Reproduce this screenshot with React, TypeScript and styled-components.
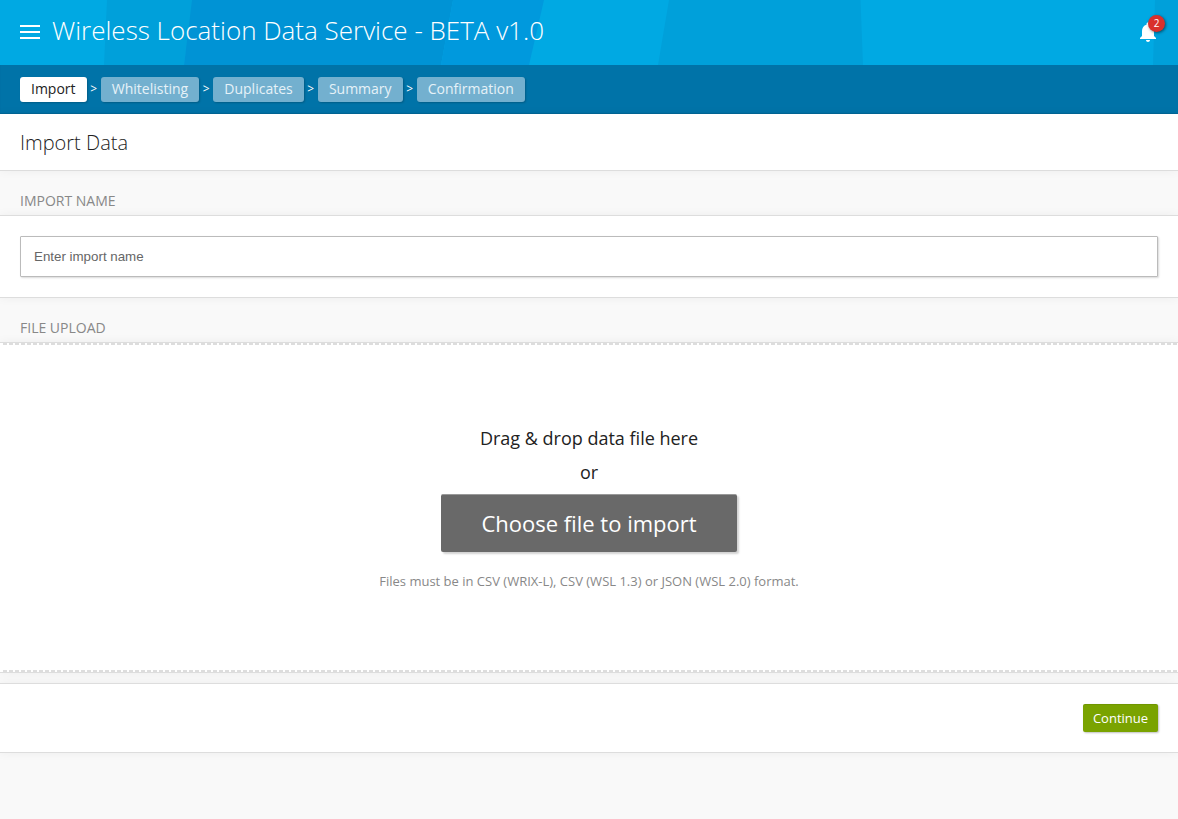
import React from "react";
import styled, { createGlobalStyle, css } from "styled-components";

const GlobalStyle = createGlobalStyle`
  *, *::before, *::after { box-sizing: border-box; }
  body {
    margin: 0;
    min-height: 100vh;
    background: #f9f9f9;
    color: #222;
    font-family: "Open Sans", "Noto Sans", sans-serif;
  }
`;

const Header = styled.header`
  position: relative;
  display: flex;
  align-items: center;
  height: 65px;
  padding: 0 20px 2px;
  background: #00a9e3;
  overflow: hidden;
`;

const HeaderArt = styled.svg`
  position: absolute;
  inset: 0;
  width: 1178px;
  height: 65px;
`;

const MenuButton = styled.button`
  position: relative;
  display: flex;
  flex-direction: column;
  gap: 4px;
  width: 20px;
  margin: 0 12px 0 0;
  padding: 0;
  border: 0;
  background: none;
`;

const MenuBar = styled.span`
  height: 2px;
  background: #fff;
`;

const AppTitle = styled.h1`
  position: relative;
  flex: 1;
  margin: 0;
  color: #fff;
  font-size: 26px;
  font-weight: 300;
  line-height: 36px;
  padding-bottom: 4px;
`;

const Alerts = styled.button`
  position: relative;
  width: 24px;
  height: 24px;
  margin: 0 -2px 0 0;
  padding: 0;
  border: 0;
  background: none;

  svg { display: block; }
`;

const Badge = styled.span`
  position: absolute;
  top: -5px;
  left: 12px;
  width: 17px;
  height: 17px;
  border-radius: 50%;
  background: #d9302c;
  box-shadow: 1px 1px 3px rgba(0, 0, 0, 0.5);
  color: #fff;
  font: 10px/17px "Open Sans", sans-serif;
  text-align: center;
`;

const StepNav = styled.nav`
  display: flex;
  align-items: flex-start;
  height: 49px;
  padding: 12px 20px 0;
  background: #0073a8;
  box-shadow: inset 0 -1px 1px rgba(0, 0, 0, 0.12);
`;

const Step = styled.a<{ $active?: boolean }>`
  height: 25px;
  padding: 0 11px;
  border-radius: 3px;
  background: #73b0cf;
  color: #e6f2f8;
  font-size: 14px;
  line-height: 24px;
  box-shadow: 1px 1px 2px rgba(0, 0, 0, 0.2);
  ${(p) =>
    p.$active &&
    css`
      background: #fff;
      color: #222;
    `}
`;

const Chevron = styled.span`
  width: 14.2px;
  color: #fff;
  font-size: 12px;
  line-height: 24px;
  text-align: center;
`;

const Panel = styled.section`
  background: #fff;
  border: solid #ddd;
  border-width: 1px 0;
  box-shadow: 0 0 10px rgba(0, 0, 0, 0.05);
`;

const TitlePanel = styled(Panel)`
  height: 57px;
  padding: 0 20px;
  border-top: 0;
`;

const PageTitle = styled.h2`
  margin: 0;
  color: #222;
  font-size: 20px;
  font-weight: 300;
  line-height: 58px;
`;

const SectionLabel = styled.h3`
  height: 44px;
  margin: 0;
  padding: 20px 20px 0;
  color: #888;
  font-size: 14px;
  font-weight: 400;
  line-height: 20px;
  text-transform: uppercase;
`;

const FieldPanel = styled(Panel)`
  height: 83px;
  padding: 20px;
`;

const NameInput = styled.input`
  display: block;
  width: 100%;
  height: 41px;
  padding: 0 13px;
  border: 1px solid #bbb;
  border-radius: 1px;
  background: #fff;
  box-shadow: 1px 1px 2px rgba(0, 0, 0, 0.15);
  font: 13.333px "Liberation Sans", Arial, sans-serif;
  outline: 0;

  &::placeholder { color: #666; opacity: 1; }
`;

const UploadPanel = styled(Panel)`
  height: 331px;
`;

const dashes = "repeating-linear-gradient(90deg, #ddd 0 4px, transparent 4px 6px)";

const DropZone = styled.div`
  display: flex;
  flex-direction: column;
  align-items: center;
  height: 329px;
  padding-top: 78px;
  background:
    ${dashes} 3px 0 / 1174px 2px no-repeat,
    ${dashes} 3px 100% / 1174px 2px no-repeat;
`;

const DropText = styled.p`
  margin: 0;
  font-size: 18px;
  line-height: 34px;
`;

const ChooseButton = styled.button`
  width: 296px;
  height: 58px;
  margin-top: 5px;
  padding: 0 0 1px;
  border: 0;
  border-top: 1px solid #999;
  border-radius: 2px;
  background: #696969;
  box-shadow: 2px 2px 2px rgba(0, 0, 0, 0.18);
  color: #fff;
  font: 22px "Open Sans", sans-serif;
`;

const Hint = styled.p`
  margin: 19px 0 0;
  color: #888;
  font-size: 13px;
  line-height: 20px;
`;

const ActionPanel = styled(Panel)`
  display: flex;
  justify-content: flex-end;
  height: 70px;
  margin-top: 10px;
  padding: 20px;
`;

const ContinueButton = styled.button`
  width: 75px;
  height: 28px;
  padding: 0;
  border: 0;
  border-radius: 2px;
  background: #7aa300;
  box-shadow: 1px 1px 2px rgba(0, 0, 0, 0.25), inset 0 1px 0 rgba(0, 0, 0, 0.08);
  color: #fff;
  font: 13px "Open Sans", sans-serif;
`;

const steps = ["Import", "Whitelisting", "Duplicates", "Summary", "Confirmation"];

export default function App() {
  return (
    <>
      <GlobalStyle />
      <Header>
        <HeaderArt viewBox="0 0 1178 65" aria-hidden="true">
          <path d="M107 0H193L184 65H104Z" fill="#00a0da" />
          <path d="M192 0H453L441 65H184Z" fill="#0093d5" />
          <path d="M453 0H544L529 65H441Z" fill="#0099dd" />
          <path d="M669 0H860.5L863 65H658Z" fill="#00a0da" />
          <path d="M1155 0H1178V65H1153Z" fill="#00a0da" />
        </HeaderArt>
        <MenuButton aria-label="Menu">
          <MenuBar />
          <MenuBar />
          <MenuBar />
        </MenuButton>
        <AppTitle>Wireless Location Data Service - BETA v1.0</AppTitle>
        <Alerts aria-label="Notifications">
          <svg width="24" height="24" viewBox="0 0 24 24" fill="#fff">
            <path d="M12 22c1.100 0 2-.9 2-2h-4c0 1.100.9 2 2 2zm6-6v-5c0-3.070-1.630-5.640-4.500-6.320V4c0-.83-.67-1.500-1.500-1.500s-1.500.67-1.500 1.500v.68C7.640 5.360 6 7.920 6 11v5l-2 2v1h16v-1l-2-2z" />
          </svg>
          <Badge>2</Badge>
        </Alerts>
      </Header>
      <StepNav>
        {steps.map((step, i) => (
          <React.Fragment key={step}>
            {i > 0 && <Chevron>&gt;</Chevron>}
            <Step $active={i === 0}>{step}</Step>
          </React.Fragment>
        ))}
      </StepNav>
      <main>
        <TitlePanel>
          <PageTitle>Import Data</PageTitle>
        </TitlePanel>
        <SectionLabel>Import name</SectionLabel>
        <FieldPanel>
          <NameInput placeholder="Enter import name" />
        </FieldPanel>
        <SectionLabel>File upload</SectionLabel>
        <UploadPanel>
          <DropZone>
            <DropText>Drag &amp; drop data file here</DropText>
            <DropText>or</DropText>
            <ChooseButton>Choose file to import</ChooseButton>
            <Hint>Files must be in CSV (WRIX-L), CSV (WSL 1.3) or JSON (WSL 2.0) format.</Hint>
          </DropZone>
        </UploadPanel>
        <ActionPanel>
          <ContinueButton>Continue</ContinueButton>
        </ActionPanel>
      </main>
    </>
  );
}
